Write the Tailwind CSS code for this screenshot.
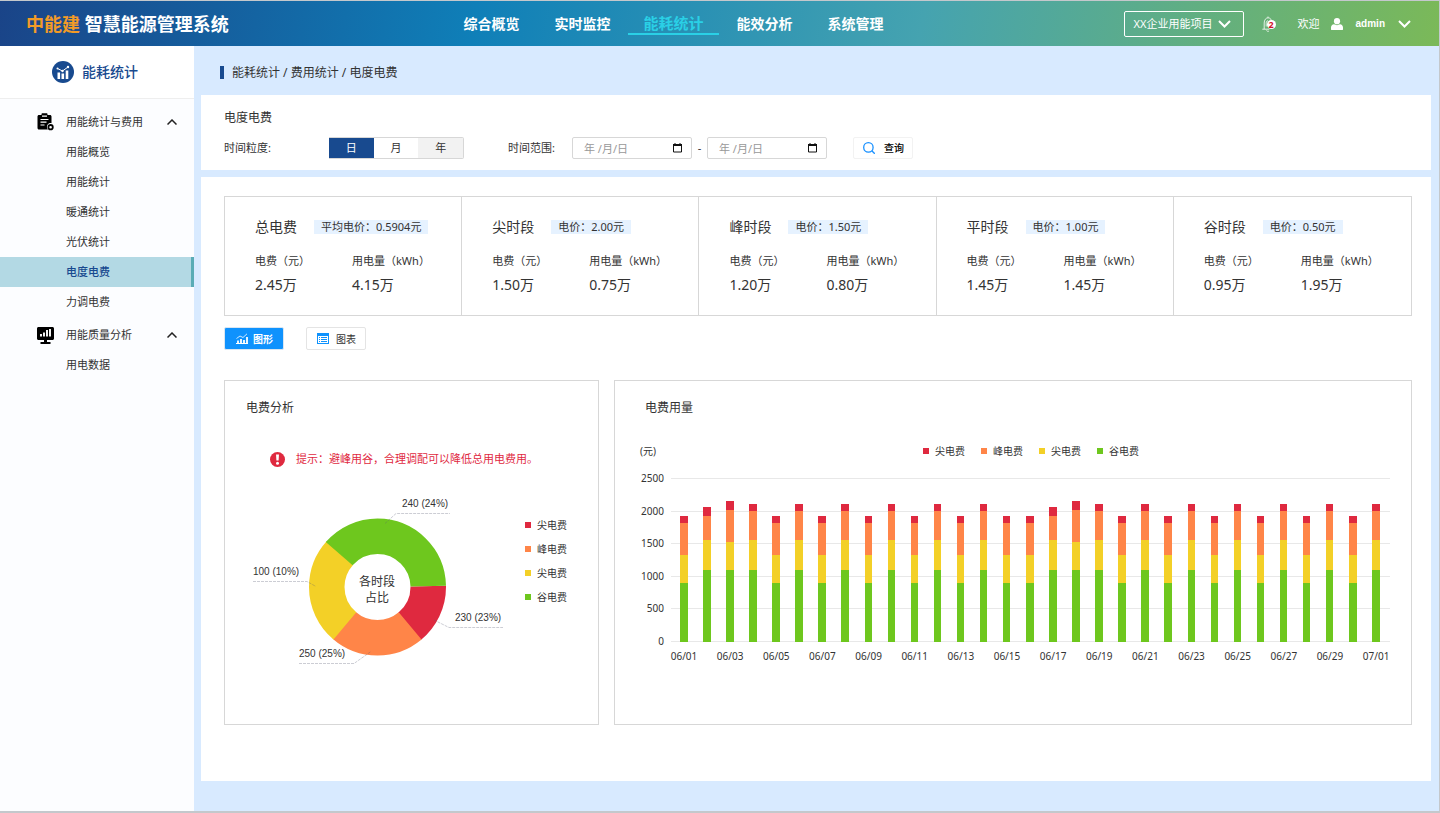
<!DOCTYPE html>
<html lang="zh-CN">
<head>
    <meta charset="UTF-8">
    <meta name="viewport" content="width=device-width, initial-scale=1.0">
    <title>智慧能源管理系统</title>
    <script src="https://cdn.jsdelivr.net/npm/@tailwindcss/browser@4"></script>
</head>
<body class="min-h-screen flex flex-col bg-[#d8eaff] border-t border-r border-b-2 border-[#c4c8cc] font-['Noto_Sans','Noto_Sans_CJK_SC',sans-serif] text-[11px] leading-5 text-[#333]">

    <!-- Top bar -->
    <header class="flex items-center h-[45px] text-white bg-[linear-gradient(100deg,#1a4488_0%,#0f7fb8_33%,#45a3b0_64%,#7bb958_100%)]">
        <h1 class="w-[446px] pl-[26px] text-lg font-bold leading-7 whitespace-nowrap"><span class="text-[#f29b27]">中能建</span> 智慧能源管理系统</h1>
        <nav class="flex items-center text-sm leading-5 font-bold text-center">
            <a href="#" class="w-[91px]">综合概览</a>
            <a href="#" class="w-[91px]">实时监控</a>
            <a href="#" class="w-[91px] text-[15px] text-[#2ad0e6] border-b-2 border-[#2ad0e6]">能耗统计</a>
            <a href="#" class="w-[91px]">能效分析</a>
            <a href="#" class="w-[91px]">系统管理</a>
        </nav>
        <div class="ml-auto flex items-center pr-[28px]">
            <button class="flex items-center justify-between w-[120px] h-[26px] pl-[9px] pr-[12px] border border-white rounded-[2px] whitespace-nowrap">
                XX企业用能项目
                <svg class="w-[13px] h-2" viewBox="0 0 13 8" fill="none" stroke="#fff" stroke-width="2"><path d="M1 1l5.500 5.500L12 1"/></svg>
            </button>
            <button class="relative ml-[18px] w-[14px] h-4" aria-label="消息">
                <svg class="w-[14px] h-4" viewBox="0 0 14 16" fill="none" stroke="#fff" stroke-opacity=".8"><path d="M6 1.800V.5M2.200 13V7c0-3 1.600-5.200 3.900-5.200S10 4 10 7M.3 13.200h7M4.500 14.500c.4.800 1.600 1 2.500.6M4.200 10.500V7.500c0-1.600.6-2.600 1.600-3"/></svg>
                <span class="absolute left-[5px] top-1 w-[9px] h-[9px] rounded-full bg-white text-[#d0112b] text-[9px] font-bold leading-[9px] text-center">2</span>
            </button>
            <span class="ml-[22px]">欢迎</span>
            <svg class="ml-[11px] w-3 h-3" viewBox="0 0 12 12" fill="#fff"><circle cx="6" cy="3.200" r="3.100"/><path d="M0 11.500V9.500C0 7.500 1.300 6.500 3 6.300c1.800 1.100 4.200 1.100 6 0 1.700.2 3 1.200 3 3.200v2c0 .3-.2.500-.5.500H.5c-.3 0-.5-.2-.5-.5z"/></svg>
            <button class="ml-[13px] flex items-center gap-[13px] text-[10px] font-bold font-['Liberation_Sans','Noto_Sans_CJK_SC',sans-serif]">
                admin
                <svg class="w-[13px] h-2" viewBox="0 0 13 8" fill="none" stroke="#fff" stroke-width="2"><path d="M1 1l5.500 5.500L12 1"/></svg>
            </button>
        </div>
    </header>

    <div class="flex flex-1">
        <!-- Sidebar -->
        <aside class="w-[194px] shrink-0 bg-[#fcfdff]">
            <div class="flex items-center h-[53px] pl-[52px] bg-white border-b border-[#eee] text-sm font-medium text-[#184a8f]">
                <svg class="mr-2 w-[22px] h-[22px]" viewBox="0 0 22 22"><circle cx="11" cy="11" r="11" fill="#184a8f"/><path d="M5.500 18v-6.500h2.600V18zM9.500 18v-5.500h2.600V18zM13.700 18v-8.500h2.600V18z" fill="#fff"/><path d="M5.500 7.500l5 2.500 5.500-4" fill="none" stroke="#fff" stroke-width="1"/><circle cx="5.500" cy="7.500" r="1" fill="#fff"/><circle cx="10.500" cy="10" r="1.200" fill="#fff"/><circle cx="16" cy="6" r="1.200" fill="#fff"/></svg>
                能耗统计
            </div>
            <nav class="pt-2">
                <button class="flex items-center w-full h-[30px] pl-[37px] pr-[17px]">
                    <svg class="w-[17px] h-[18px]" viewBox="0 0 17 18"><path d="M2 2h2.500V1.200C4.500.6 5 .2 5.500.2h4c.6 0 1 .4 1 1V2H13c.8 0 1.500.6 1.500 1.500v6.700c-2.600-.6-4.700 1.300-4.600 3.800 0 1 .4 1.800 1 2.500H2c-.9 0-1.500-.6-1.500-1.500V3.500C.5 2.600 1.100 2 2 2z"/><path d="M5 3.200h5M3.500 6.500h8M3.500 9.200h6M3.500 12h4" stroke="#fff" stroke-width="1.200"/><circle cx="13.600" cy="14.200" r="2.200" fill="#fff" stroke="#000" stroke-width="1.800"/></svg>
                    <span class="ml-3">用能统计与费用</span>
                    <svg class="ml-auto w-[10px] h-[6px]" viewBox="0 0 10 6" fill="none" stroke="#222" stroke-width="1.500"><path d="M.5 5.500L5 1l4.500 4.500"/></svg>
                </button>
                <a href="#" class="flex items-center h-[30px] pl-[66px]">用能概览</a>
                <a href="#" class="flex items-center h-[30px] pl-[66px]">用能统计</a>
                <a href="#" class="flex items-center h-[30px] pl-[66px]">暖通统计</a>
                <a href="#" class="flex items-center h-[30px] pl-[66px]">光伏统计</a>
                <a href="#" class="flex items-center h-[30px] pl-[66px] bg-[#b3d9e4] border-r-3 border-[#5aacb6] text-[#184a8f] font-medium">电度电费</a>
                <a href="#" class="flex items-center h-[30px] pl-[66px]">力调电费</a>
                <button class="mt-[3px] flex items-center w-full h-[30px] pl-[37px] pr-[17px]">
                    <svg class="w-[17px] h-[17px]" viewBox="0 0 17 17"><path d="M1.500 0h14c.8 0 1.500.7 1.500 1.500v10c0 .8-.7 1.500-1.500 1.500H10v2h3.500v2h-10v-2H7v-2H1.500C.7 13 0 12.300 0 11.500v-10C0 .7.700 0 1.500 0z"/><path d="M4 9.500V7M7 9.500V5.500M10 9.500V3M13 9.500V2" stroke="#fff" stroke-width="1.900"/></svg>
                    <span class="ml-3">用能质量分析</span>
                    <svg class="ml-auto w-[10px] h-[6px]" viewBox="0 0 10 6" fill="none" stroke="#222" stroke-width="1.500"><path d="M.5 5.500L5 1l4.500 4.500"/></svg>
                </button>
                <a href="#" class="flex items-center h-[30px] pl-[66px]">用电数据</a>
            </nav>
        </aside>

        <main class="flex-1 min-w-0 pl-[7px] pr-2 pb-[30px]">
            <div class="flex items-center h-[49px] pt-1 pl-[19px] text-xs">
                <span class="mr-2 w-1 h-[13px] bg-[#184a8f]"></span>
                能耗统计 / 费用统计 / 电度电费
            </div>

            <!-- Filters -->
            <section class="bg-white h-[75px] pl-[23px] pt-[13px]">
                <h2 class="text-xs leading-5">电度电费</h2>
                <form class="mt-[9px] flex items-center h-[22px]" onsubmit="return false">
                    <span class="w-[105px]">时间粒度:</span>
                    <div class="flex w-[135px] h-[22px] border border-[#d7d7d7] border-l-0 rounded-r-[2px]">
                        <button type="button" class="flex-1 bg-[#184a8f] text-white">日</button>
                        <button type="button" class="flex-1">月</button>
                        <button type="button" class="flex-1 bg-[#f2f2f2]">年</button>
                    </div>
                    <label for="startDate" class="ml-[44px] w-[64px]">时间范围:</label>
                    <div class="relative">
                        <input id="startDate" type="text" placeholder="年 /月/日" class="block w-[120px] h-[22px] pl-[11px] border border-[#d7d7d7] rounded-[2px] placeholder:text-[#999]">
                        <svg class="absolute right-[10px] top-[6px] w-[9px] h-[10px]" viewBox="0 0 9 10" fill="none" stroke="#111"><path d="M.5 1.500h8v7.500h-8z"/><path d="M0 2h9" stroke-width="2"/><path d="M2 0v1M7 0v1"/></svg>
                    </div>
                    <span class="w-[15px] text-center">-</span>
                    <div class="relative">
                        <input id="endDate" type="text" placeholder="年 /月/日" aria-label="结束日期" class="block w-[120px] h-[22px] pl-[11px] border border-[#d7d7d7] rounded-[2px] placeholder:text-[#999]">
                        <svg class="absolute right-[10px] top-[6px] w-[9px] h-[10px]" viewBox="0 0 9 10" fill="none" stroke="#111"><path d="M.5 1.500h8v7.500h-8z"/><path d="M0 2h9" stroke-width="2"/><path d="M2 0v1M7 0v1"/></svg>
                    </div>
                    <button class="ml-[26px] flex items-center w-[60px] h-[22px] pl-[9px] gap-[9px] border border-[#f2f2f2] rounded-[2px] text-[10px] font-medium text-black">
                        <svg class="w-3 h-3" viewBox="0 0 12 12" fill="none" stroke="#1890ff" stroke-width="1.300"><circle cx="5.400" cy="5.400" r="4.700"/><path d="M8.800 8.800l3 3"/></svg>
                        查询
                    </button>
                </form>
            </section>

            <section class="mt-[7px] bg-white pt-[19px] pl-[23px] pr-[19px] pb-[56px]">
                <div id="stats" class="grid grid-cols-5 h-[120px] border border-[#d7d7d7] divide-x divide-[#d7d7d7]"></div>

                <div class="mt-[11px] flex gap-[22px] text-[10px]">
                    <button class="flex items-center w-[60px] h-[23px] pl-[11px] gap-[5px] bg-[#0f92fd] text-white font-bold border border-[#d9e6f2] rounded-[2px]">
                        <svg class="w-3 h-[11px]" viewBox="0 0 12 11" fill="none" stroke="#fff"><path d="M0 10.500h12"/><path d="M2 10V7.500M5 10V6M8 10V7M11 10V4" stroke-width="1.800"/><path d="M.5 5.500L4 3l3 1.500L11 .8" stroke-width=".8"/></svg>
                        图形
                    </button>
                    <button class="flex items-center w-[60px] h-[23px] pl-[10px] gap-[7px] bg-white border border-[#e4e4e4] rounded-[2px]">
                        <svg class="w-3 h-[11px]" viewBox="0 0 12 11"><path d="M0 0h12v11H0z" fill="#0f92fd"/><path d="M1 3h10v7H1z" fill="#fff"/><path d="M2 4.500h1M4 4.500h6M2 6.500h1M4 6.500h6M2 8.500h1M4 8.500h6" stroke="#0f92fd"/></svg>
                        图表
                    </button>
                </div>

                <div class="mt-[30px] grid grid-cols-[375fr_798fr] gap-[15px]">
                    <!-- Cost breakdown -->
                    <div class="min-w-0 border border-[#d7d7d7] pt-[17px] pl-5 pb-[54px]">
                        <h3 class="text-xs leading-5 pl-px">电费分析</h3>
                        <p class="mt-[31px] flex items-center pl-[25px] leading-5 text-[#df293f] whitespace-nowrap">
                            <svg class="mr-[11px] w-[15px] h-[15px]" viewBox="0 0 15 15"><circle cx="7.500" cy="7.500" r="7.500" fill="#df293f"/><path d="M6 2.500h3l-.4 6H6.400z" fill="#fff"/><circle cx="7.500" cy="11.300" r="1.500" fill="#fff"/></svg>
                            提示：避峰用谷，合理调配可以降低总用电费用。
                        </p>
                        <div class="mt-[26px] flex">
                            <svg class="w-[265px] h-[175px]" viewBox="0 0 265 175" fill="none">
                                <g stroke-width="35.500">
                                    <circle cx="132.500" cy="92" r="50.750" pathLength="360" stroke="#df293f" stroke-dasharray="52 308" stroke-dashoffset="1"/>
                                    <circle cx="132.500" cy="92" r="50.750" pathLength="360" stroke="#ff8548" stroke-dasharray="81 279" stroke-dashoffset="-50"/>
                                    <circle cx="132.500" cy="92" r="50.750" pathLength="360" stroke="#f3d027" stroke-dasharray="92 268" stroke-dashoffset="-130"/>
                                    <circle cx="132.500" cy="92" r="50.750" pathLength="360" stroke="#6ec71e" stroke-dasharray="138 222" stroke-dashoffset="-221"/>
                                </g>
                                <g stroke="#555a70" stroke-opacity=".3" stroke-dasharray="3 1">
                                    <path d="M140 28.500l11-10h54"/>
                                    <path d="M8 86.500h54l9 5"/>
                                    <path d="M189 125l15 7.500h54"/>
                                    <path d="M54 168.500h55l17-12"/>
                                </g>
                                <g class="text-[10px] font-['Liberation_Sans',sans-serif]" fill="#333">
                                    <text x="157" y="12">240 (24%)</text>
                                    <text x="8" y="80">100 (10%)</text>
                                    <text x="210" y="126">230 (23%)</text>
                                    <text x="54" y="162">250 (25%)</text>
                                </g>
                                <g class="text-xs" fill="#333" text-anchor="middle">
                                    <text x="132" y="91">各时段</text>
                                    <text x="132" y="107">占比</text>
                                </g>
                            </svg>
                            <ul class="ml-[15px] mt-[18px] text-[10px] leading-6">
                                <li class="flex items-center gap-[6px]"><i class="w-[6px] h-[6px] bg-[#df293f]"></i>尖电费</li>
                                <li class="flex items-center gap-[6px]"><i class="w-[6px] h-[6px] bg-[#ff8548]"></i>峰电费</li>
                                <li class="flex items-center gap-[6px]"><i class="w-[6px] h-[6px] bg-[#f3d027]"></i>尖电费</li>
                                <li class="flex items-center gap-[6px]"><i class="w-[6px] h-[6px] bg-[#6ec71e]"></i>谷电费</li>
                            </ul>
                        </div>
                    </div>

                    <!-- Daily usage -->
                    <div class="min-w-0 border border-[#d7d7d7] pt-[17px]">
                        <h3 class="text-xs leading-5 pl-[30px]">电费用量</h3>
                        <div class="mt-[23px] flex items-center pr-[21px] text-[10px] leading-5">
                            <span class="w-[57px] pl-[25px]">(元)</span>
                            <ul class="flex-1 flex justify-center gap-[16px]">
                                <li class="flex items-center gap-[6px]"><i class="w-[6px] h-[6px] bg-[#df293f]"></i>尖电费</li>
                                <li class="flex items-center gap-[6px]"><i class="w-[6px] h-[6px] bg-[#ff8548]"></i>峰电费</li>
                                <li class="flex items-center gap-[6px]"><i class="w-[6px] h-[6px] bg-[#f3d027]"></i>尖电费</li>
                                <li class="flex items-center gap-[6px]"><i class="w-[6px] h-[6px] bg-[#6ec71e]"></i>谷电费</li>
                            </ul>
                        </div>
                        <svg id="barChart" class="mt-2 block w-full h-auto text-[10px]" viewBox="0 0 796 196" fill="#333"></svg>
                    </div>
                </div>
            </section>
        </main>
    </div>

    <script>
        // Price periods
        const periods = [
            { name: '总电费', price: '平均电价：0.5904元', cost: '2.45万', usage: '4.15万' },
            { name: '尖时段', price: '电价：2.00元', cost: '1.50万', usage: '0.75万' },
            { name: '峰时段', price: '电价：1.50元', cost: '1.20万', usage: '0.80万' },
            { name: '平时段', price: '电价：1.00元', cost: '1.45万', usage: '1.45万' },
            { name: '谷时段', price: '电价：0.50元', cost: '0.95万', usage: '1.95万' }
        ];

        document.getElementById('stats').innerHTML = periods.map(p => `
            <div class="pt-5 pl-[30px] whitespace-nowrap">
                <div class="flex items-center h-5">
                    <h3 class="text-sm leading-5">${p.name}</h3>
                    <span class="ml-[17px] px-[7px] h-[14px] leading-[14px] bg-[#e6f2ff]">${p.price}</span>
                </div>
                <dl class="mt-[14px] flex">
                    <div class="w-[97px]">
                        <dt class="leading-5">电费（元）</dt>
                        <dd class="mt-1 text-sm leading-5">${p.cost}</dd>
                    </div>
                    <div>
                        <dt class="leading-5">用电量（kWh）</dt>
                        <dd class="mt-1 text-sm leading-5">${p.usage}</dd>
                    </div>
                </dl>
            </div>`).join('');

        // Stacked bars, bottom to top: 谷, 平, 峰, 尖
        const colors = ['#6ec71e', '#f3d027', '#ff8548', '#df293f'];
        const low = [900, 430, 490, 105];
        const high = [1100, 460, 445, 105];
        const second = [1100, 460, 380, 130];
        const third = [1100, 440, 490, 130];
        const days = [
            low, second, third, high, low, high, low, high, low, high,
            low, high, low, high, low, low, second, third, high, low,
            high, low, high, low, high, low, high, low, high, low, high
        ];

        function drawBars() {
            const baseY = 173;
            const scale = 163 / 2500;
            let out = '';

            for (let v = 0; v <= 2500; v += 500) {
                const y = Math.round(baseY - v * scale);
                out += `<path d="M56 ${y - 0.5}H775" stroke="#e8e8e8"/>`;
                out += `<text x="49" y="${y + 3}" text-anchor="end">${v}</text>`;
            }

            days.forEach((values, i) => {
                const x = 65 + i * 23.07;
                let total = 0;
                values.forEach((value, k) => {
                    const bottom = Math.round(baseY - total * scale);
                    total += value;
                    const top = Math.round(baseY - total * scale);
                    out += `<rect x="${x}" y="${top}" width="7.5" height="${bottom - top}" fill="${colors[k]}" shape-rendering="crispEdges"/>`;
                });
                if (i % 2 === 0) {
                    const label = i < 30 ? '06/' + String(i + 1).padStart(2, '0') : '07/01';
                    out += `<text x="${x + 4}" y="191" text-anchor="middle">${label}</text>`;
                }
            });

            document.getElementById('barChart').innerHTML = out;
        }

        drawBars();
    </script>
</body>
</html>
